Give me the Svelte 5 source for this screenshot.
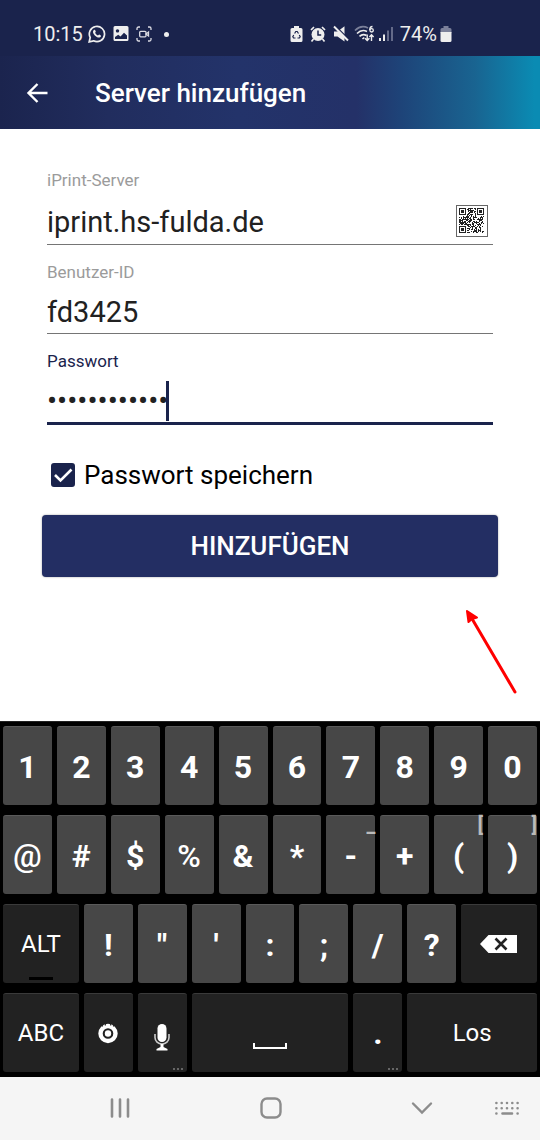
<script>
  let server = $state('iprint.hs-fulda.de')
  let user = $state('fd3425')
  let password = $state('fulda-print1')
  let savePassword = $state(true)

  const rows = [
    [...'1234567890'].map((c) => ({ label: c })),
    [
      { label: '@', medium: true },
      { label: '#' },
      { label: '$' },
      { label: '%', medium: true },
      { label: '&' },
      { label: '*' },
      { label: '-', hint: '_' },
      { label: '+' },
      { label: '(', hint: '[' },
      { label: ')', hint: ']' },
    ],
    [
      { label: 'ALT', span: 3, dark: true, lock: true },
      ...[...'!"\':;/?'].map((c) => ({ label: c })),
      { icon: 'backspace', name: 'Löschen', span: 3, dark: true },
    ],
    [
      { label: 'ABC', span: 3, dark: true },
      { icon: 'settings', name: 'Einstellungen', dark: true },
      { icon: 'mic', name: 'Spracheingabe', dark: true, more: true },
      { icon: 'space', name: 'Leerzeichen', span: 6, dark: true },
      { label: '.', dark: true, more: true },
      { label: 'Los', span: 5, dark: true },
    ],
  ]
  const keys = rows.flat()

  // 25x25 modules, three finder patterns in the corners
  const SIZE = 25
  function finder(x, y) {
    if (x < 0 || y < 0 || x > 6 || y > 6) return false
    const d = Math.max(Math.abs(x - 3), Math.abs(y - 3))
    return d !== 2
  }

  function buildCode() {
    let path = ''
    let seed = 77
    for (let y = 0; y < SIZE; y++) {
      for (let x = 0; x < SIZE; x++) {
        seed = (seed * 16807) % 2147483647
        const left = x < 8
        const right = x > SIZE - 9
        const top = y < 8
        const bottom = y > SIZE - 9
        let on = seed / 2147483647 > 0.5
        if (left && top) on = finder(x, y)
        else if (right && top) on = finder(x - SIZE + 7, y)
        else if (left && bottom) on = finder(x, y - SIZE + 7)
        if (on) path += `M${x} ${y}h1v1h-1z`
      }
    }
    return path
  }
  const code = buildCode()
</script>

<div class="screen">
  <div class="status">
    <div class="status-left">
      <span class="time">10:15</span>
      <svg width="18" height="18" viewBox="0 0 18 18" fill="none">
        <path d="M1.2 16.8l1-4.3A7.6 7.6 0 1 1 5.6 15.8z" stroke="#eee" stroke-width="1.7" />
        <path d="M5.6 5.2c.7-.8 1.3-.6 1.6 0l.6 1.4c.1.5-.7 1-.6 1.3.6 1.2 1.5 2 2.7 2.5.4.1.9-1 1.4-.8l1.5.8c.6.5-.2 2-1.5 2.2C8.5 12.9 4.7 9.2 5 6.5z" fill="#eee" />
      </svg>
      <svg width="16" height="16" viewBox="0 0 16 16">
        <path fill="#eee" fill-rule="evenodd" d="M2 0h12a1.5 1.5 0 0 1 1.5 1.5v12A1.5 1.5 0 0 1 14 15H2a1.5 1.5 0 0 1-1.5-1.5v-12A1.5 1.5 0 0 1 2 0zM4.5 3.2a1.7 1.7 0 1 0 .01 0zM2 13h12V9.5L11 6.8 7.5 10.5 5.2 8.8 2 11z" />
      </svg>
      <svg width="16" height="16" viewBox="0 0 16 16" fill="none" stroke="#dcdce4" stroke-width="1.3">
        <path d="M1 4V2.5A1.5 1.5 0 0 1 2.5 1H4M12 1h1.5A1.5 1.5 0 0 1 15 2.5V4M15 12v1.5a1.5 1.5 0 0 1-1.5 1.5H12M4 15H2.5A1.5 1.5 0 0 1 1 13.5V12" />
        <rect x="3.7" y="5.3" width="6.3" height="5.5" rx="1" />
        <path d="M10 8l2.5-2v4z" />
      </svg>
      <span class="dot"></span>
    </div>
    <div class="status-right">
      <svg width="13" height="18" viewBox="0 0 13 18">
        <path fill="#eee" d="M4 1h5v2h2a1.5 1.5 0 0 1 1.5 1.5v11A1.5 1.5 0 0 1 11 17H2a1.5 1.5 0 0 1-1.5-1.5v-11A1.5 1.5 0 0 1 2 3h2z" />
        <path fill="none" stroke="#1a234c" stroke-width="1.2" d="M4.6 8.5l1.2-2h1.4l1.3 2M9.3 10l.9 1.7-.8 1.3H7.5M5.5 13H3.6l-.8-1.3.9-1.7" />
      </svg>
      <svg width="16" height="18" viewBox="0 0 16 18">
        <circle cx="8" cy="9.5" r="6.5" fill="#eee" />
        <path stroke="#eee" stroke-width="1.7" fill="none" d="M1 5l3-3M15 5l-3-3M3.5 14l-2 2.5M12.5 14l2 2.5" />
        <path stroke="#1a234c" stroke-width="1.5" fill="none" d="M8 5.5v4.5h3.2" />
      </svg>
      <svg width="16" height="18" viewBox="0 0 16 18">
        <path fill="#eee" d="M1 6.5h3.5l7-5.2v15.2l-7-5H1z" />
        <path stroke="#1a234c" stroke-width="1.5" d="M2.5 1l14 14" />
        <path stroke="#eee" stroke-width="1.9" d="M1 1.5l14 14" />
      </svg>
      <svg class="wifi" width="22" height="18" viewBox="0 0 22 18" fill="none">
        <path stroke="#7b809a" stroke-width="1.7" d="M1 5.5C5 1.5 10 1 14 3" />
        <path stroke="#eee" stroke-width="1.6" d="M3 8.5C6 5.5 10 5 13 6.5M5.5 11.3C8 9 10 9 12.5 10.5M8.5 14l1.8-1.5" />
        <path stroke="#eee" stroke-width="1.4" d="M18.5 1.5c-2 0-2.7 1.5-2.7 3.5M13.2 9.5v6M11 13.3l2.2 2.2 2.2-2.2M17.5 16v-6M15.4 12l2.1-2.2 2.1 2.2" />
        <circle cx="17.6" cy="5.3" r="1.7" stroke="#eee" stroke-width="1.3" />
      </svg>
      <svg class="signal" width="16" height="18" viewBox="0 0 16 18">
        <path stroke="#eee" stroke-width="2" d="M2 13v3M6 9.5V16" />
        <path stroke="#646a89" stroke-width="2" d="M10 5.5V16M14 2v14" />
      </svg>
      <span class="percent">74%</span>
      <svg width="12" height="18" viewBox="0 0 12 18">
        <path fill="#7b809a" d="M3.5 1h5v2H10a1.5 1.5 0 0 1 1.5 1.5V8H.5V4.5A1.5 1.5 0 0 1 2 3h1.5z" />
        <path fill="#eee" d="M.5 7h11v8.5A1.5 1.5 0 0 1 10 17H2A1.5 1.5 0 0 1 .5 15.5z" />
      </svg>
    </div>
  </div>

  <header>
    <button class="back" aria-label="Zurück">
      <svg width="24" height="24" viewBox="0 0 24 24" fill="none" stroke="#fff" stroke-width="2.4">
        <path d="M12.5 3L3.5 12l9 9M3.5 12h19" />
      </svg>
    </button>
    <h1>Server hinzufügen</h1>
  </header>

  <main>
    <form onsubmit={(e) => e.preventDefault()}>
      <div class="field">
        <label for="server">iPrint-Server</label>
        <div class="line">
          <input id="server" type="text" bind:value={server} />
          <button type="button" class="qr" aria-label="QR-Code scannen">
            <svg width="32" height="32" viewBox="0 0 32 32" shape-rendering="crispEdges">
              <rect x="0.5" y="0.5" width="31" height="31" fill="#fff" stroke="#666" />
              <path transform="translate(3 3)" d={code} fill="#222" />
            </svg>
          </button>
        </div>
      </div>
      <div class="field">
        <label for="user">Benutzer-ID</label>
        <div class="line">
          <input id="user" type="text" bind:value={user} />
        </div>
      </div>
      <div class="field active">
        <label for="password">Passwort</label>
        <div class="line">
          <input id="password" class="secret" type="password" bind:value={password} />
          <span class="caret"></span>
        </div>
      </div>

      <label class="remember">
        <span class="box">
          <input type="checkbox" bind:checked={savePassword} />
          {#if savePassword}
            <svg width="24" height="24" viewBox="0 0 24 24" fill="none" stroke="#fff" stroke-width="2.6">
              <path d="M4 12l5.5 5.5L20.5 6.5" />
            </svg>
          {/if}
        </span>
        Passwort speichern
      </label>

      <button class="submit">HINZUFÜGEN</button>
    </form>

    <svg class="arrow" width="52" height="86" viewBox="0 0 52 86" fill="#f00" stroke="#f00" stroke-linecap="round" stroke-linejoin="round">
      <path stroke-width="3" fill="none" d="M50 83L6 8" />
      <path stroke-width="2" d="M2 2l10 6.5-5 1.5-3.500 3z" />
    </svg>
  </main>

  <div class="keyboard">
    {#each keys as key}
      <button
        class="key"
        class:dark={key.dark}
        class:word={key.label?.length > 1}
        class:medium={key.medium}
        class:span3={key.span === 3}
        class:span5={key.span === 5}
        class:span6={key.span === 6}
        aria-label={key.name}
      >
        {#if key.icon === 'backspace'}
          <svg width="38" height="20" viewBox="0 0 38 20">
            <path fill="#fff" d="M0 10l8.5-9H37v18H8.5z" />
            <path stroke="#222" stroke-width="2.6" d="M15.5 4.5l11 11M26.5 4.5l-11 11" />
          </svg>
        {:else if key.icon === 'settings'}
          <svg width="20" height="22" viewBox="0 0 20 22" fill="none">
            <circle cx="10" cy="11.5" r="7.5" stroke="#fff" stroke-width="4.4" />
            <circle cx="10" cy="11.5" r="3.2" fill="#fff" />
            <path stroke="#222" stroke-width="1.2" d="M7.3 1v2.5M12.7 1v2.5M3.3 2.5l1.5 1.8M16.7 2.5l-1.5 1.8" />
          </svg>
        {:else if key.icon === 'mic'}
          <svg class="mic" width="16" height="28" viewBox="0 0 16 28">
            <rect x="3.5" y="1" width="9" height="18" rx="4.5" fill="#fff" />
            <path fill="none" stroke="#ccc" stroke-width="1.6" d="M1 11v3.5a7 6.5 0 0 0 14 0V11" />
            <path fill="#fff" d="M6.5 21h3v3l4 2v1.5h-11V26l4-2z" />
          </svg>
        {:else if key.icon === 'space'}
          <svg class="space" width="34" height="6" viewBox="0 0 34 6" fill="none" stroke="#fff" stroke-width="2">
            <path d="M1 0v5h32V0" />
          </svg>
        {:else}
          {key.label}
        {/if}
        {#if key.hint}<span class="hint">{key.hint}</span>{/if}
        {#if key.lock}<span class="lock"></span>{/if}
        {#if key.more}
          <svg class="more" width="10" height="2" viewBox="0 0 10 2" fill="#666">
            <path d="M0 0h2v2H0zM4 0h2v2H4zM8 0h2v2H8z" />
          </svg>
        {/if}
      </button>
    {/each}
  </div>

  <nav>
    <button aria-label="Letzte Apps">
      <svg width="24" height="24" viewBox="0 0 24 24" stroke="#8c8c8c" stroke-width="2.6" stroke-linecap="round">
        <path d="M4 3.5v17M12 3.5v17M20 3.5v17" />
      </svg>
    </button>
    <button aria-label="Startbildschirm">
      <svg width="24" height="24" viewBox="0 0 24 24" fill="none" stroke="#8c8c8c" stroke-width="2.4">
        <rect x="2.5" y="2.5" width="19" height="19" rx="5.5" />
      </svg>
    </button>
    <button aria-label="Tastatur ausblenden">
      <svg width="24" height="24" viewBox="0 0 24 24" fill="none" stroke="#8c8c8c" stroke-width="2.4" stroke-linecap="round">
        <path d="M3 7.5l9 9 9-9" />
      </svg>
    </button>
    <button aria-label="Tastatur wechseln">
      <svg width="26" height="16" viewBox="0 0 26 16" fill="none" stroke="#8c8c8c" stroke-width="2.6" stroke-linecap="round">
        <path stroke-dasharray="0 5.3" d="M2.4 3h21.3M2.4 8.2h21.3" />
        <path d="M2.4 13.5h.01M8.5 13.5h9.5M23.6 13.5h.01" />
      </svg>
    </button>
  </nav>
</div>

<style>
  :global(body) {
    background: #fff;
  }

  .screen {
    display: flex;
    flex-direction: column;
    min-height: 100vh;
    font-family: Roboto, 'Noto Sans', sans-serif;
  }

  svg {
    display: block;
    flex: none;
  }

  button {
    padding: 0;
    border: none;
    background: none;
    color: inherit;
    font: inherit;
    cursor: pointer;
  }

  .status {
    display: flex;
    justify-content: space-between;
    height: 56px;
    padding: 12px 88px 0 33px;
    box-sizing: border-box;
    background: #1a234c;
    color: #eee;
    font-size: 20px;
  }

  .status-left,
  .status-right {
    display: flex;
    align-items: center;
    gap: 7px;
  }

  .time {
    margin-right: -2px;
  }

  .dot {
    width: 5px;
    height: 5px;
    margin-left: 5px;
    border-radius: 50%;
    background: #eee;
  }

  .percent {
    margin-right: -4px;
  }

  .wifi {
    margin-left: -2px;
  }

  .signal {
    margin: 0 -1px 0 -5px;
  }

  header {
    display: flex;
    align-items: center;
    gap: 46px;
    height: 73px;
    padding-left: 25px;
    background: linear-gradient(90deg, #1b244e 0%, #212d5e 20%, #23336a 44%, #243168 66%, #1e4378 74%, #196491 88%, #0a8bb3 99%);
    color: #fff;
  }

  h1 {
    margin: 0;
    font-size: 26px;
    font-weight: 500;
  }

  main {
    position: relative;
    flex: 1;
    padding: 40px 42px;
  }

  form {
    display: flex;
    flex-direction: column;
  }

  .field {
    margin: 0 5px 16px;
  }

  .field label {
    display: block;
    color: #9b9b9b;
    font-size: 17px;
    line-height: 22px;
  }

  .line {
    display: flex;
    align-items: center;
    min-height: 51px;
    padding-top: 8px;
    box-sizing: border-box;
    border-bottom: 1px solid #757575;
  }

  .line input {
    flex: 1;
    min-width: 0;
    padding: 0;
    border: none;
    outline: none;
    background: none;
    color: #212121;
    font: inherit;
    font-size: 29px;
    line-height: 36px;
  }

  .line .secret {
    flex: none;
    field-sizing: content;
    font-size: 30px;
  }

  .qr {
    padding: 6px 5px 7px;
  }

  .active label {
    color: #1a234c;
  }

  .active .line {
    min-height: 53px;
    border-bottom: 3px solid #1a234c;
  }

  .caret {
    width: 3px;
    height: 40px;
    margin-left: -2px;
    background: #1a234c;
  }

  .remember {
    display: flex;
    align-items: center;
    gap: 9px;
    margin: 20px 9px 26px;
    color: #000;
    font-size: 26px;
    line-height: 28px;
  }

  .box {
    position: relative;
    width: 24px;
    height: 24px;
  }

  .box input {
    display: block;
    width: 24px;
    height: 24px;
    margin: 0;
    appearance: none;
    border: 2px solid #1a234c;
    border-radius: 3px;
  }

  .box input:checked {
    background: #1a234c;
  }

  .box svg {
    position: absolute;
    inset: 0;
    pointer-events: none;
  }

  .submit {
    height: 62px;
    border-radius: 4px;
    background: #232e63;
    box-shadow: 0 0 2px rgba(0, 0, 0, 0.4);
    color: #fff;
    font-size: 26px;
    font-weight: 500;
  }

  .arrow {
    position: absolute;
    right: 23px;
    bottom: 26px;
  }

  .keyboard {
    display: grid;
    grid-template-columns: repeat(20, minmax(0, 1fr));
    grid-auto-rows: 79px;
    gap: 10px 5px;
    padding: 4px 3px 5px;
    border-top: 1px solid #222;
    background: #000;
  }

  .key {
    position: relative;
    display: flex;
    align-items: center;
    justify-content: center;
    grid-column: span 2;
    padding-top: 2px;
    border-top: 1px solid #5a5a5a;
    border-radius: 3px;
    background: #474747;
    color: #fff;
    font-size: 32px;
    font-weight: 700;
  }

  .dark {
    padding-top: 0;
    border-top-color: #3a3a3a;
    background: #222;
  }

  .word {
    font-size: 24px;
    font-weight: 400;
  }

  .medium {
    font-weight: 500;
  }

  .span3 {
    grid-column: span 3;
  }

  .span5 {
    grid-column: span 5;
  }

  .span6 {
    grid-column: span 6;
  }

  .hint {
    position: absolute;
    top: -3px;
    right: 0;
    color: #bbb;
    font-size: 20px;
    font-weight: 700;
    line-height: 24px;
  }

  .lock {
    position: absolute;
    bottom: 3px;
    left: 50%;
    width: 24px;
    height: 3px;
    margin-left: -12px;
    background: #000;
  }

  .more {
    position: absolute;
    right: 4px;
    bottom: 2px;
  }

  .mic {
    margin-top: 8px;
  }

  .space {
    margin-top: 26px;
  }

  nav {
    display: grid;
    grid-template-columns: 1fr 1fr 1fr 20px;
    height: 63px;
    padding: 0 23px 2px 44px;
    box-sizing: border-box;
    background: #f5f5f5;
  }

  nav button {
    display: flex;
    align-items: center;
    justify-content: center;
  }
</style>
